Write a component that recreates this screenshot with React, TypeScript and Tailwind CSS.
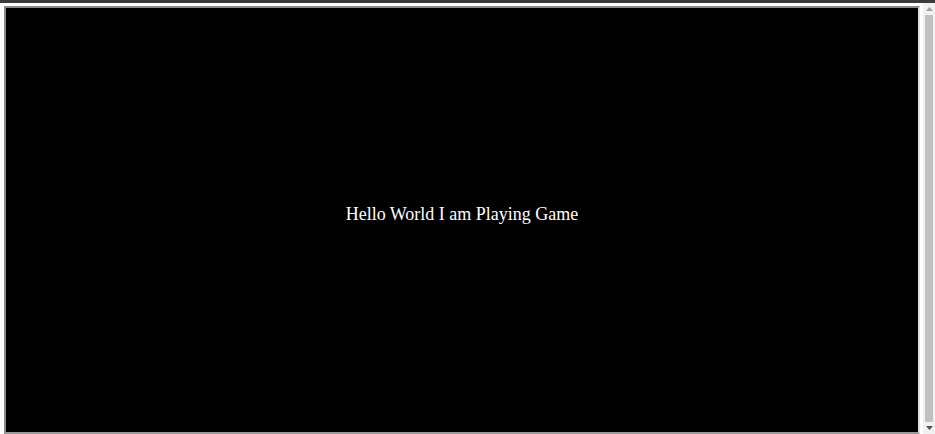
export default function App() {
  return (
    <div className="flex h-[434px] w-[935px] flex-col overflow-hidden bg-white">
      {/* top strip */}
      <div className="h-[3px] w-full shrink-0 bg-[#3b3b3b]" />
      <div className="flex min-h-0 flex-1">
        {/* game area */}
        <div className="flex min-w-0 flex-1 pl-[4px] pt-[3px] pr-[3px]">
          <div className="flex flex-1 items-center justify-center border-2 border-t-[#8a8a8a] border-l-[#8a8a8a] border-r-[#e0e0e0] border-b-[#9a9a9a] bg-black pb-[11px]">
            <span
              className="text-[18px] text-white"
              style={{ fontFamily: '"Liberation Serif", "Times New Roman", serif' }}
            >
              Hello World I am Playing Game
            </span>
          </div>
        </div>

        {/* scrollbar */}
        <div className="flex w-[12px] shrink-0 flex-col items-center bg-[#f1f1f1]">
          <div className="flex h-[12px] w-full items-center justify-center">
            <svg width="7" height="4" viewBox="0 0 7 4">
              <path d="M0 4 L3.5 0 L7 4 Z" fill="#a3a3a3" />
            </svg>
          </div>
          <div className="w-[8px] flex-1 bg-[#c1c1c1]" />
          <div className="flex h-[12px] w-full items-center justify-center">
            <svg width="7" height="4" viewBox="0 0 7 4">
              <path d="M0 0 L7 0 L3.5 4 Z" fill="#505050" />
            </svg>
          </div>
        </div>
      </div>
    </div>
  )
}
